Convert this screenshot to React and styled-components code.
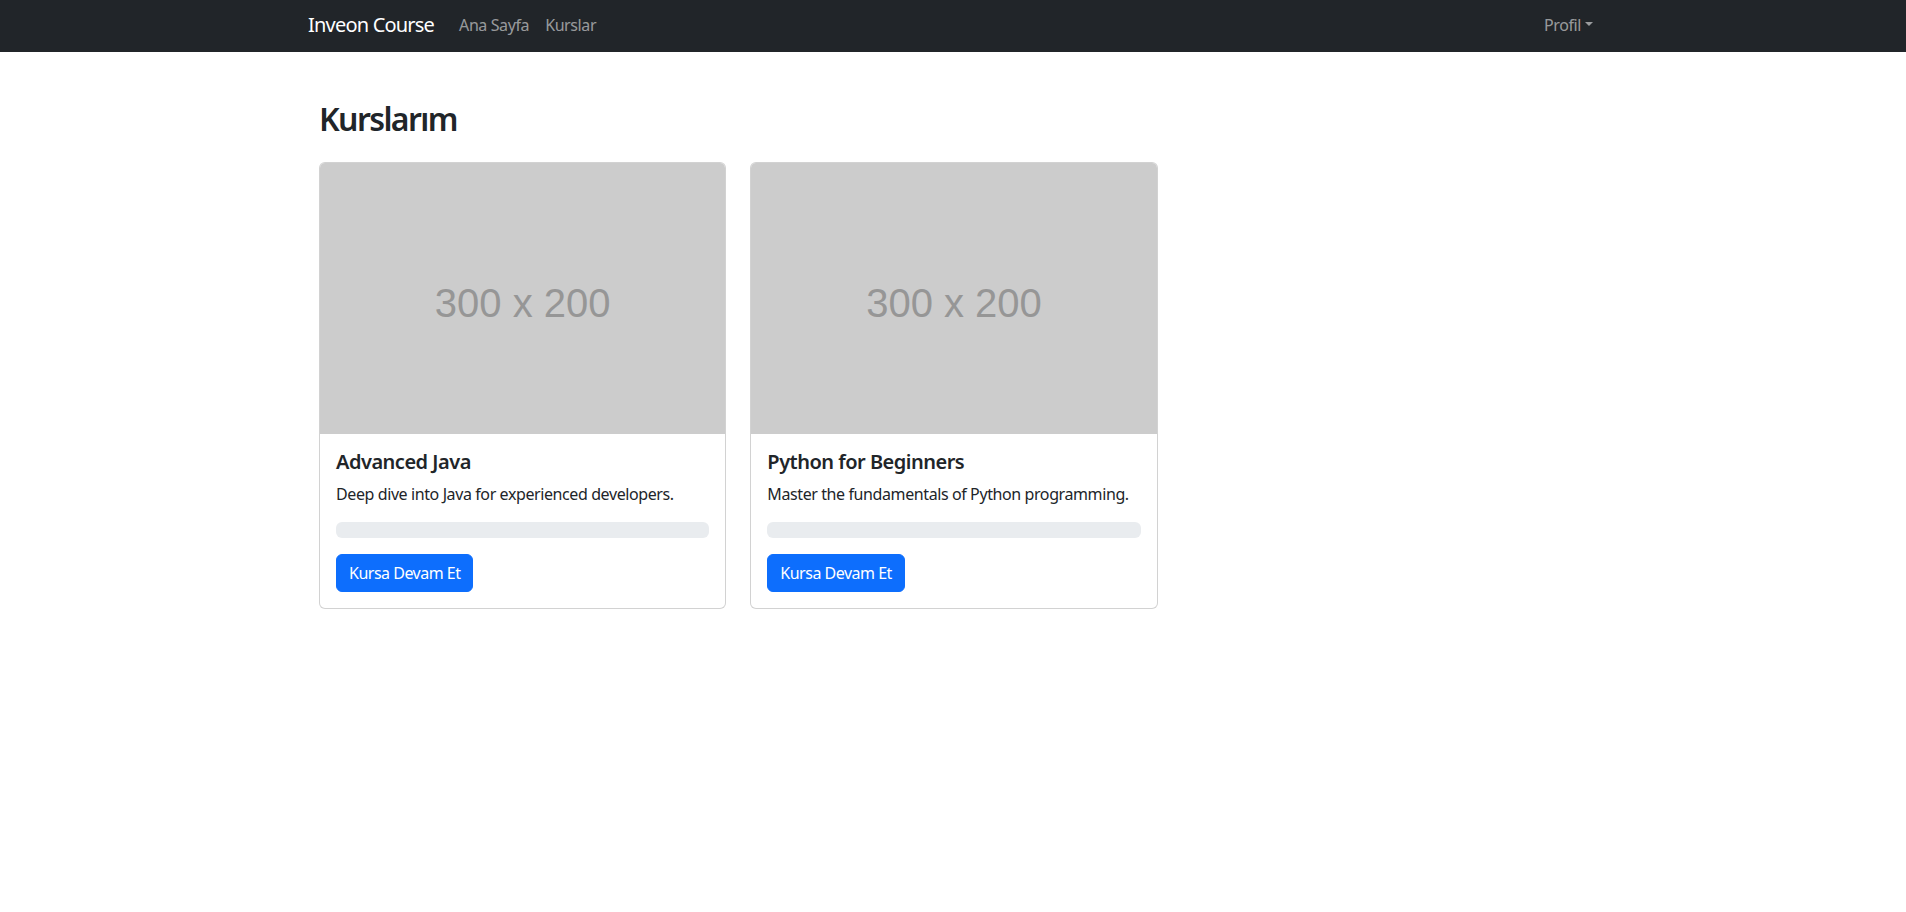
import styled, { createGlobalStyle } from "styled-components";

const GlobalStyle = createGlobalStyle`
    * {
        box-sizing: border-box;
    }
    body {
        margin: 0;
        background: #fff;
        color: #212529;
        font-family: "Segoe UI", "Noto Sans", "Liberation Sans", sans-serif;
        font-size: 16px;
        line-height: 1.5;
        letter-spacing: -0.4px;
    }
`

const courses = [
    { title: "Advanced Java", description: "Deep dive into Java for experienced developers.", progress: 0 },
    { title: "Python for Beginners", description: "Master the fundamentals of Python programming.", progress: 0 },
];

const App = () => {
    return (<>
        <GlobalStyle />
        <Navbar>
            <NavContainer>
                <Brand href="#">Inveon Course</Brand>
                <NavList>
                    <NavLink href="#">Ana Sayfa</NavLink>
                    <NavLink href="#">Kurslar</NavLink>
                </NavList>
                <ProfileToggle href="#">Profil<Caret /></ProfileToggle>
            </NavContainer>
        </Navbar>
        <Main>
            <PageTitle>Kurslarım</PageTitle>
            <CardGrid>
                {courses.map((course) => (
                    <Card key={course.title}>
                        <Placeholder>300 x 200</Placeholder>
                        <CardBody>
                            <CardTitle>{course.title}</CardTitle>
                            <CardText>{course.description}</CardText>
                            <Progress>
                                <ProgressBar style={{ width: `${course.progress}%` }} />
                            </Progress>
                            <Button>Kursa Devam Et</Button>
                        </CardBody>
                    </Card>
                ))}
            </CardGrid>
        </Main>
    </>);
}

export default App;

const Navbar = styled.nav`
    height: 52px;
    background: #212529;
    display: flex;
    align-items: center;
`

const NavContainer = styled.div`
    width: 100%;
    max-width: 1320px;
    margin: 0 auto;
    padding: 0 12px 2px;
    display: flex;
    align-items: center;
`

const Brand = styled.a`
    color: #fff;
    font-size: 20px;
    line-height: 30px;
    letter-spacing: -0.8px;
    text-decoration: none;
    margin-left: 3px;
    margin-right: 17px;
`

const NavList = styled.div`
    display: flex;
    flex: 1;
`

const NavLink = styled.a`
    color: rgba(255, 255, 255, 0.55);
    text-decoration: none;
    padding: 8px;
`

const ProfileToggle = styled(NavLink)`
    display: flex;
    align-items: center;
`

const Caret = styled.span`
    display: inline-block;
    margin-left: 4px;
    margin-top: -2px;
    border-top: 4.8px solid;
    border-left: 4px solid transparent;
    border-right: 4px solid transparent;
`

const Main = styled.main`
    max-width: 1320px;
    margin: 48px auto 0;
    padding: 0 24px 0 26px;
`

const PageTitle = styled.h2`
    margin: 0 0 24px;
    font-size: 32px;
    font-weight: 600;
    line-height: 1.2;
    letter-spacing: -1.6px;
`

const CardGrid = styled.div`
    display: grid;
    grid-template-columns: repeat(3, 1fr);
    gap: 24px;
`

const Card = styled.div`
    border: 1px solid rgba(0, 0, 0, 0.175);
    border-radius: 6px;
    overflow: hidden;
    background: #fff;
`

const Placeholder = styled.div`
    aspect-ratio: 3 / 2;
    background: #cccccc;
    color: #969696;
    font-family: "Liberation Sans", Arial, sans-serif;
    font-size: 40px;
    letter-spacing: 0;
    padding-top: 8px;
    display: flex;
    align-items: center;
    justify-content: center;
`

const CardBody = styled.div`
    padding: 16px;
`

const CardTitle = styled.h5`
    margin: 0 0 8px;
    font-size: 20px;
    font-weight: 600;
    line-height: 1.2;
    letter-spacing: -0.5px;
`

const CardText = styled.p`
    margin: 0 0 16px;
`

const Progress = styled.div`
    height: 16px;
    background: #e9ecef;
    border-radius: 6px;
    overflow: hidden;
    margin-bottom: 16px;
`

const ProgressBar = styled.div`
    height: 100%;
    background: #0d6efd;
`

const Button = styled.button`
    font: inherit;
    letter-spacing: -0.5px;
    color: #fff;
    background: #0d6efd;
    border: 1px solid #0d6efd;
    border-radius: 6px;
    padding: 6px 12px;
    line-height: 24px;
    cursor: pointer;
`
